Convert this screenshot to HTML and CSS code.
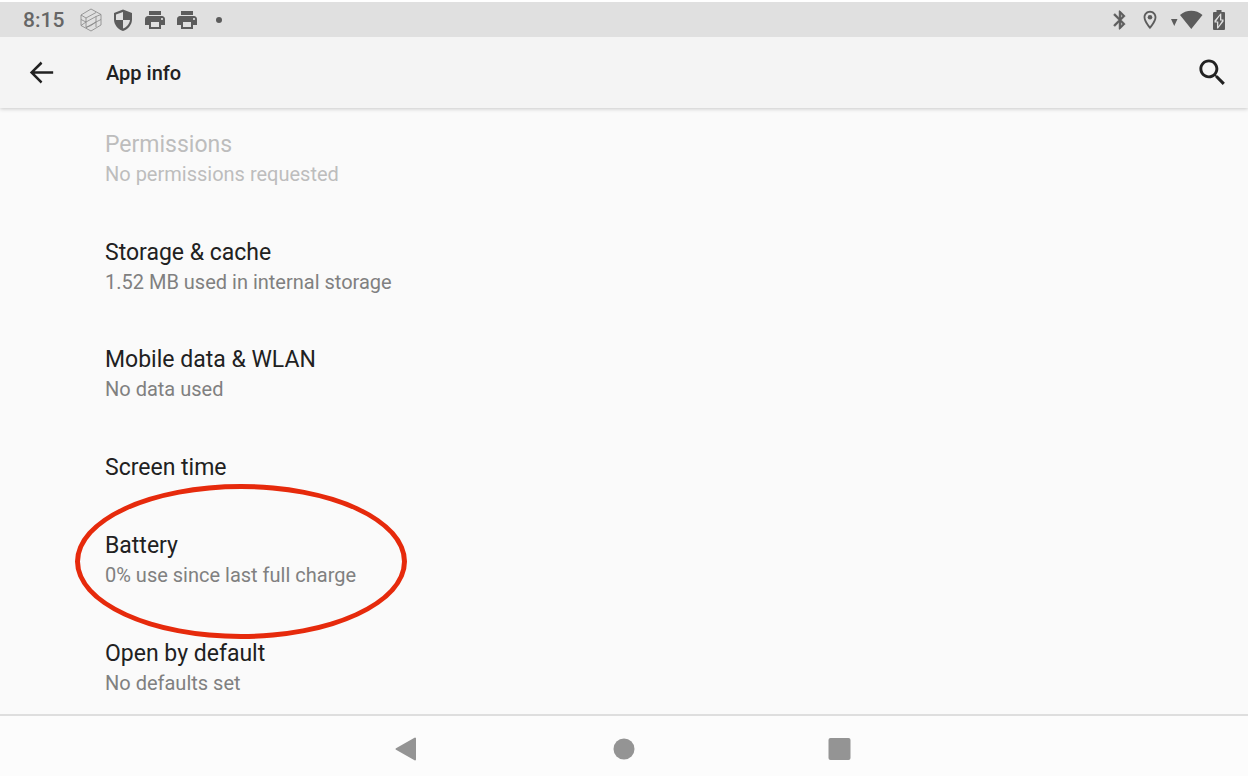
FILE: index.html
```html
<!DOCTYPE html>
<html lang="en">
<head>
<meta charset="utf-8">
<meta name="viewport" content="width=device-width, initial-scale=1">
<title>App info</title>
<link rel="stylesheet" href="styles.css">
</head>
<body>
<div class="status-bar">
  <time class="clock">8:15</time>
  <div class="notifications">
    <svg viewBox="0 0 24 24" class="icon cube"><path d="M2 7 12 1 22 6.500V17L12 23 2 17.500zM2 7 7 10 17 4.500M7 10V14L17 8.500 22 6.500M2 11.500 7 14M17 8.500V19M7 14V19.500L17 14 22 11.500M2 17.500 7 14M7 19.500 12 17.500 17 14"/></svg>
    <svg viewBox="0 0 24 24" class="icon"><path fill-rule="evenodd" d="M12 1.500 3 5v6.500c0 5 3.700 9.700 9 11.500 5.300-1.800 9-6.500 9-11.500V5zM12 4v8h7c-.5 3.800-3.300 7.300-7 8.600V12H5V6.600z"/></svg>
    <svg viewBox="0 0 24 24" class="icon"><path d="M19 8H5c-1.660 0-3 1.340-3 3v6h4v4h12v-4h4v-6c0-1.660-1.340-3-3-3zm-3 11H8v-5h8v5zm3-7c-.55 0-1-.45-1-1s.45-1 1-1 1 .45 1 1-.45 1-1 1zm-1-9H6v4h12V3z"/></svg>
    <svg viewBox="0 0 24 24" class="icon"><path d="M19 8H5c-1.660 0-3 1.340-3 3v6h4v4h12v-4h4v-6c0-1.660-1.340-3-3-3zm-3 11H8v-5h8v5zm3-7c-.55 0-1-.45-1-1s.45-1 1-1 1 .45 1 1-.45 1-1 1zm-1-9H6v4h12V3z"/></svg>
    <svg viewBox="0 0 24 24" class="icon"><circle cx="12" cy="12" r="3"/></svg>
  </div>
  <div class="system">
    <svg viewBox="0 0 24 24" class="icon bluetooth"><path d="M17.710 7.710 12 2h-1v7.590L6.410 5 5 6.410 10.590 12 5 17.590 6.410 19 11 14.410V22h1l5.710-5.710-4.300-4.290 4.300-4.290zM13 5.830l1.880 1.880L13 9.590V5.830zm1.880 10.460L13 18.170v-3.760l1.880 1.880z"/></svg>
    <svg viewBox="0 0 24 24" class="icon"><path fill-rule="evenodd" d="M12 2C8.130 2 5 5.130 5 9c0 5.250 7 13 7 13s7-7.750 7-13c0-3.870-3.130-7-7-7zM7 9c0-2.760 2.240-5 5-5s5 2.240 5 5c0 2.880-2.880 7.190-5 9.880C9.920 16.210 7 11.850 7 9z"/><circle cx="12" cy="9" r="2.500"/></svg>
    <svg viewBox="0 0 36 20" class="wifi"><path d="M2 9h6.500L5.250 16zM11 5C17 -.8 27.500 -.8 33.500 5L22.250 19z"/></svg>
    <svg viewBox="0 0 12 20" class="battery"><path fill-rule="evenodd" d="M3.500 0h5v2H11q1 0 1 1v16q0 1-1 1H1q-1 0-1-1V3q0-1 1-1h2.500zM7.500 3.500 1.500 10.500v2H4V18.500h1L10.500 11.500V9.500H8.300V3.500z"/><path d="M7 5.500 3 11.500h2.300V16.500L9.200 10.500H7z"/></svg>
  </div>
</div>
<header class="app-bar">
  <button class="bar-button" aria-label="Back"><svg viewBox="0 0 24 24"><path d="M20 11.200H7.300l5.300-5.200L11.500 4.500l-7.500 7.500 7.500 7.500 1.100-1.400L7.300 12.800H20z"/></svg></button>
  <h1 class="title">App info</h1>
  <button class="bar-button" aria-label="Search"><svg viewBox="0 0 24 24"><path d="M15.500 14h-.79l-.28-.27C15.410 12.590 16 11.110 16 9.500 16 5.910 13.090 3 9.500 3S3 5.910 3 9.500 5.910 16 9.500 16c1.610 0 3.090-.59 4.230-1.570l.27.28v.79l5 4.990L20.490 19l-4.990-5zm-6 0C7.010 14 5 11.990 5 9.500S7.010 5 9.500 5 14 7.010 14 9.500 11.990 14 9.500 14z"/></svg></button>
</header>
<main class="settings">
  <button class="row" disabled><span class="name">Permissions</span><span class="summary">No permissions requested</span></button>
  <button class="row"><span class="name">Storage &amp; cache</span><span class="summary">1.52 MB used in internal storage</span></button>
  <button class="row"><span class="name">Mobile data &amp; WLAN</span><span class="summary">No data used</span></button>
  <button class="row"><span class="name">Screen time</span></button>
  <button class="row circled"><span class="name">Battery</span><span class="summary">0% use since last full charge</span></button>
  <button class="row"><span class="name">Open by default</span><span class="summary">No defaults set</span></button>
</main>
<nav class="nav-bar" aria-label="System navigation">
  <button class="nav-button" aria-label="Back"><svg viewBox="0 0 48 48"><path d="M31 13.500V34.500L12.500 24z" stroke="#949494" stroke-width="2" stroke-linejoin="round"/></svg></button>
  <button class="nav-button" aria-label="Home"><svg viewBox="0 0 48 48"><circle cx="24" cy="24" r="10.500"/></svg></button>
  <button class="nav-button" aria-label="Recent apps"><svg viewBox="0 0 48 48"><rect x="12.500" y="13" width="22" height="22" rx="2"/></svg></button>
</nav>
</body>
</html>
```
FILE: styles.css
```css
* {
  box-sizing: border-box;
}

html {
  height: 100%;
  background: #fff;
}

body {
  display: flex;
  flex-direction: column;
  min-height: 100%;
  margin: 0;
  padding: 2px 4px 0 0;
  font-family: Roboto, "Liberation Sans", sans-serif;
  color: #212121;
}

button {
  margin: 0;
  padding: 0;
  border: 0;
  background: none;
  color: inherit;
  font: inherit;
}

svg {
  display: block;
}

.status-bar {
  display: flex;
  align-items: center;
  height: 35px;
  padding: 0 23px;
  background: #e0e0e0;
  color: #666;
  fill: #5c5c5c;
}

.clock {
  width: 56px;
  font-size: 21px;
  font-weight: 500;
}

.notifications,
.system {
  display: flex;
  align-items: center;
  gap: 8px;
}

.system {
  margin-left: auto;
}

.icon {
  width: 24px;
  height: 24px;
}

.cube {
  fill: none;
  stroke: #858585;
  stroke-width: 0.8;
}

.system .icon {
  width: 22px;
  height: 22px;
}

.bluetooth {
  stroke: #5c5c5c;
  stroke-width: 0.6;
}

.wifi {
  width: 36px;
  height: 20px;
}

.battery {
  width: 12px;
  height: 20px;
}

.app-bar {
  position: relative;
  display: flex;
  align-items: center;
  height: 71px;
  padding: 0 18px 0 24px;
  background: #f4f4f4;
  box-shadow: 0 1px 4px rgba(0, 0, 0, 0.2);
  clip-path: inset(0 0 -8px);
}

.bar-button svg {
  width: 35px;
  height: 35px;
  fill: #212121;
}

.title {
  flex: 1;
  margin: 0;
  padding-left: 47px;
  font-size: 20px;
  font-weight: 500;
}

.settings {
  display: flex;
  flex: 1;
  flex-direction: column;
  justify-content: space-between;
  padding: 21px 0 16px;
  background: #fafafa;
}

.row {
  position: relative;
  padding: 0 105px;
  text-align: left;
}

.row:disabled {
  color: #bdbdbd;
}

.name,
.summary {
  display: block;
}

.name {
  font-size: 23px;
  line-height: 31px;
}

.summary {
  font-size: 20px;
  line-height: 29px;
  color: #808080;
}

.row:disabled .summary {
  color: inherit;
}

.circled::after {
  content: "";
  position: absolute;
  box-sizing: border-box;
  top: -46px;
  left: 75px;
  width: 332px;
  height: 155px;
  border: 5px solid #e62a0c;
  border-radius: 50%;
}

.nav-bar {
  display: flex;
  align-items: center;
  justify-content: center;
  gap: 168px;
  height: 62px;
  padding-top: 6px;
  border-top: 2px solid #dedede;
  background: #fcfcfc;
}

.nav-button svg {
  width: 48px;
  height: 48px;
  fill: #949494;
}
```
